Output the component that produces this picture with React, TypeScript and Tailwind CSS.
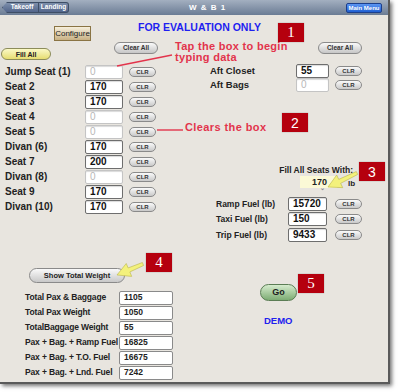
import React from "react"

const FONT = "font-['Liberation_Sans',Arial,sans-serif]"

const seats: [string, string][] = [
  ["Jump Seat (1)", "0"],
  ["Seat 2", "170"],
  ["Seat 3", "170"],
  ["Seat 4", "0"],
  ["Seat 5", "0"],
  ["Divan (6)", "170"],
  ["Seat 7", "200"],
  ["Divan (8)", "0"],
  ["Seat 9", "170"],
  ["Divan (10)", "170"],
]

const fuel: [string, string][] = [
  ["Ramp Fuel (lb)", "15720"],
  ["Taxi Fuel (lb)", "150"],
  ["Trip Fuel (lb)", "9433"],
]

const totals: [string, string][] = [
  ["Total Pax & Baggage", "1105"],
  ["Total Pax Weight", "1050"],
  ["TotalBaggage Weight", "55"],
  ["Pax + Bag. + Ramp Fuel", "16825"],
  ["Pax + Bag. + T.O. Fuel", "16675"],
  ["Pax + Bag. + Lnd. Fuel", "7242"],
]

function Field({ value, className = "" }: { value: string; className?: string }) {
  const empty = value === "0"
  return (
    <div
      className={`flex h-[14px] items-center rounded-[2px] border bg-white pl-[4px] text-[10px] leading-none shadow-[inset_0_1px_1px_rgba(0,0,0,0.15)] ${
        empty ? "border-[#c4c4c4] font-normal text-[#b8b8b8]" : "border-[#6e6e6e] font-bold text-[#111]"
      } ${className}`}
    >
      {value}
    </div>
  )
}

function Clr() {
  return (
    <div className="flex h-[10px] w-[27px] items-center justify-center rounded-full border border-[#8a8a8a] bg-gradient-to-b from-[#fafafa] to-[#c9c9c9] text-[6px] font-bold leading-none text-[#333]">
      CLR
    </div>
  )
}

function ClearAll() {
  return (
    <div className="flex h-[12px] w-[44px] items-center justify-center whitespace-nowrap rounded-full border border-[#8a8a8a] bg-gradient-to-b from-[#fafafa] to-[#c6c6c6] text-[6.5px] font-bold leading-none text-[#333]">
      Clear All
    </div>
  )
}

function RedBox({ n, serif, className }: { n: string; serif?: boolean; className: string }) {
  return (
    <div
      className={`absolute flex h-[19px] w-[26px] items-center justify-center bg-[#b5000e] text-white shadow-[0_0_1px_rgba(0,0,0,0.4)] ${
        serif ? "font-['Liberation_Serif',serif] text-[15px]" : "text-[14px]"
      } leading-none ${className}`}
    >
      {n}
    </div>
  )
}

// polygon for a fat yellow pointer arrow, from tail to tip
function arrowPoints(tail: [number, number], tip: [number, number]) {
  const dx = tip[0] - tail[0]
  const dy = tip[1] - tail[1]
  const len = Math.hypot(dx, dy)
  const d = [dx / len, dy / len]
  const n = [-d[1], d[0]]
  const h = 13
  const at = (base: [number, number], back: number, side: number) =>
    `${base[0] - d[0] * back + n[0] * side},${base[1] - d[1] * back + n[1] * side}`
  return [
    at(tip, 0, 0),
    at(tip, h, 7),
    at(tip, h, 2.2),
    at(tail, 0, 1.6),
    at(tail, 0, -1.6),
    at(tip, h, -2.2),
    at(tip, h, -7),
  ].join(" ")
}

export default function App() {
  return (
    <div className={`h-[392px] w-[400px] bg-white ${FONT}`}>
      <div className="flex h-[384px] w-[390px] flex-col overflow-hidden border-b-2 border-r-2 border-[#5a5a5a] shadow-[2px_2px_4px_rgba(0,0,0,0.55)]">
        {/* nav bar */}
        <div className="relative flex h-[15px] shrink-0 items-center bg-gradient-to-b from-[#a3afc0] to-[#6b7c94] px-[2px]">
          <div className="flex h-[11px] items-stretch whitespace-nowrap text-[6.5px] font-bold leading-none text-white">
            <div className="flex w-[37px] items-center justify-center border border-[#3e4e66] bg-gradient-to-b from-[#7d8fab] to-[#52658a] pl-[3px] [clip-path:polygon(5px_0,100%_0,100%_100%,5px_100%,0_50%)]">
              Takeoff
            </div>
            <div className="flex w-[30px] items-center justify-center rounded-r-[3px] border border-l-0 border-[#3e4e66] bg-gradient-to-b from-[#7d8fab] to-[#52658a]">
              Landing
            </div>
          </div>
          <div className="flex-1 text-center text-[8px] font-bold tracking-[1px] text-white">W &amp; B 1</div>
          <div className="mr-[4px] flex h-[10px] w-[36px] items-center justify-center whitespace-nowrap rounded-[2px] border border-[#1c3f8c] bg-gradient-to-b from-[#5b95f2] to-[#1f5fd2] text-[6px] font-bold leading-none text-white">
            Main Menu
          </div>
        </div>

        {/* content */}
        <div className="relative flex-1 bg-[#e8e5df]">
          {/* top row */}
          <div className="mt-[6px] flex h-[21px] items-start">
            <div className="ml-[54px] mt-[5px] flex h-[15px] w-[37px] items-center justify-center border border-[#8a7444] bg-gradient-to-b from-[#f6efdc] to-[#c8b184] text-[8px] leading-none text-[#222]">
              Configure
            </div>
            <div className="ml-[47px] whitespace-nowrap text-[10.5px] font-bold leading-[12px] text-[#1f1ff0]">
              FOR EVALUATION ONLY
            </div>
          </div>

          {/* second row */}
          <div className="flex h-[22px] items-start">
            <div className="ml-[1px] mt-[6px] flex h-[12px] w-[50px] items-center justify-center rounded-full border border-[#8c8c5a] bg-gradient-to-b from-[#fbf9c6] to-[#e6dd70] text-[7px] font-bold leading-none text-[#222]">
              Fill All
            </div>
            <div className="ml-[63px]">
              <ClearAll />
            </div>
            <div className="ml-[160px]">
              <ClearAll />
            </div>
          </div>

          <div className="flex">
            {/* left column */}
            <div className="flex w-[200px] flex-col">
              {seats.map(([label, value]) => (
                <div key={label} className="flex h-[15px] items-center">
                  <div className="w-[85px] whitespace-nowrap pl-[5px] text-[10px] font-bold leading-none text-[#222]">
                    {label}
                  </div>
                  <Field value={value} className="w-[38px]" />
                  <div className="ml-[6px]">
                    <Clr />
                  </div>
                </div>
              ))}

              <div className="ml-[29px] mt-[54px] flex h-[15px] w-[96px] items-center justify-center whitespace-nowrap rounded-full border border-[#8a8a8a] bg-gradient-to-b from-[#fafafa] to-[#c8c8c8] text-[7.5px] font-bold leading-none text-[#222]">
                Show Total Weight
              </div>

              <div className="mt-[7px] flex flex-col">
                {totals.map(([label, value]) => (
                  <div key={label} className="flex h-[15px] items-center">
                    <div className="w-[119px] whitespace-nowrap pl-[25px] text-[8.5px] font-bold leading-none tracking-[-0.15px] text-[#222]">
                      {label}
                    </div>
                    <div className="flex h-[14px] w-[54px] items-center rounded-[2px] border border-[#8a8a8a] bg-white pl-[4px] text-[8.5px] font-bold leading-none text-[#222]">
                      {value}
                    </div>
                  </div>
                ))}
              </div>
            </div>

            {/* right column */}
            <div className="flex flex-1 flex-col">
              {[
                ["Aft Closet", "55"],
                ["Aft Bags", "0"],
              ].map(([label, value]) => (
                <div key={label} className="flex h-[14px] items-center">
                  <div className="w-[96px] whitespace-nowrap pl-[10px] text-[9.5px] font-bold leading-none text-[#222]">
                    {label}
                  </div>
                  <Field value={value} className="w-[33px]" />
                  <div className="ml-[6px]">
                    <Clr />
                  </div>
                </div>
              ))}

              <div className="mt-[74px] whitespace-nowrap pr-[35px] text-right text-[8.5px] font-bold leading-[9px] text-[#222]">
                Fill All Seats With:
              </div>
              <div className="mt-[1px] flex items-end pl-[100px]">
                <div className="relative flex h-[12px] w-[37px] items-center bg-[#fbf9d6] pl-[12px] text-[9px] font-bold leading-none text-[#222]">
                  170
                  <span className="absolute bottom-[-3px] left-[20px] text-[6px] text-[#888]">⌄</span>
                </div>
                <div className="ml-[11px] text-[8px] font-bold leading-none text-[#222]">lb</div>
              </div>

              <div className="mt-[8px] flex flex-col">
                {fuel.map(([label, value]) => (
                  <div key={label} className="flex h-[15.5px] items-center">
                    <div className="w-[88px] whitespace-nowrap pl-[16px] text-[8.5px] font-bold leading-none text-[#222]">
                      {label}
                    </div>
                    <Field value={value} className="w-[39px]" />
                    <div className="ml-[8px]">
                      <Clr />
                    </div>
                  </div>
                ))}
              </div>

              <div className="ml-[60px] mt-[41px] flex h-[17px] w-[37px] items-center justify-center rounded-full border border-[#5b7d55] bg-gradient-to-b from-[#d6ecce] to-[#7dac74] text-[9px] font-bold leading-none text-[#1d1d1d]">
                Go
              </div>
              <div className="ml-[64px] mt-[15px] text-[9.5px] font-bold leading-[10px] text-[#2121ee]">DEMO</div>
            </div>
          </div>

          {/* annotations */}
          <RedBox n="1" serif className="left-[278px] top-[8px]" />
          <RedBox n="2" className="left-[282px] top-[98px]" />
          <RedBox n="3" className="left-[359px] top-[147px]" />
          <RedBox n="4" serif className="left-[146px] top-[238px]" />
          <RedBox n="5" serif className="left-[298px] top-[259px]" />

          <div className="absolute left-[175px] top-[26px] whitespace-nowrap text-[11px] font-bold leading-[11px] tracking-[0.3px] text-[#e2344c]">
            Tap the box to begin
            <br />
            typing data
          </div>
          <div className="absolute left-[185px] top-[106px] whitespace-nowrap text-[11px] font-bold leading-[12px] tracking-[0.4px] text-[#e2344c]">
            Clears the box
          </div>

          <svg className="pointer-events-none absolute left-0 top-0" width="390" height="369">
            <line x1="117" y1="51" x2="172" y2="40" stroke="#e2344c" strokeWidth="1.4" />
            <line x1="157" y1="115" x2="183" y2="115" stroke="#e2344c" strokeWidth="1.4" />
            <polygon points={arrowPoints([357, 158], [328, 172])} fill="#f3f17c" stroke="#b9b34a" strokeWidth="0.6" />
            <polygon points={arrowPoints([143, 249], [117, 260])} fill="#f3f17c" stroke="#b9b34a" strokeWidth="0.6" />
          </svg>
        </div>
      </div>
    </div>
  )
}
